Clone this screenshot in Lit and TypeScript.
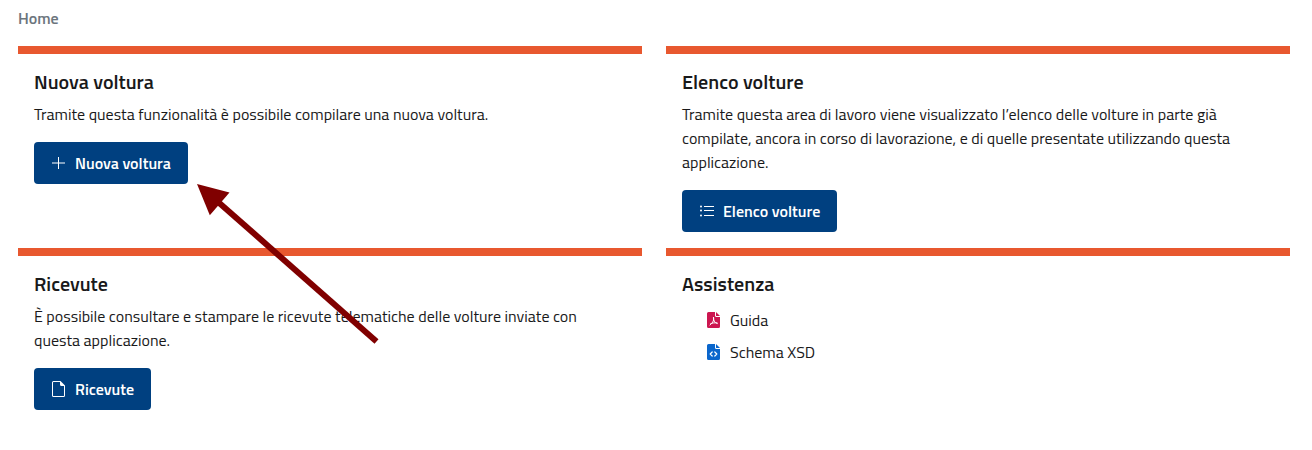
import { LitElement, html, svg, css } from "lit";
import { customElement } from "lit/decorators.js";

const icon = (body: unknown, cls = "") =>
  html`<svg class="icon ${cls}" viewBox="0 0 16 16" fill="currentColor" aria-hidden="true">${body}</svg>`;

const plus = svg`<path d="M1 7.500h6V2h1v5.500h6v1H8V14H7V8.500H1z" />`;
const list = svg`<path d="M5 3h10v1H5zM5 7h10v1H5zM5 12h10v1H5z" /><circle cx="2" cy="3.500" r="1" /><circle cx="2" cy="7.500" r="1" /><circle cx="2" cy="12.500" r="1" />`;
const file = svg`<path d="M9.500 0H2.500A1.500 1.500 0 0 0 1 1.500v13A1.500 1.500 0 0 0 2.500 16h10a1.500 1.500 0 0 0 1.500-1.500V4.500zM9 1v2.500A1.500 1.500 0 0 0 10.500 5H13v9.500a.500.500 0 0 1-.500.500h-10a.500.500 0 0 1-.500-.500v-13a.500.500 0 0 1 .500-.500z" />`;
const sheet = svg`<path d="M3 0h6v3.500A1.500 1.500 0 0 0 10.500 5H14v9.500a1.500 1.500 0 0 1-1.500 1.500h-10A1.500 1.500 0 0 1 1 14.500v-13A1.500 1.500 0 0 1 2.500 0zM10 0l4 4h-3.500a.500.500 0 0 1-.500-.500z" />`;
const pdf = svg`${sheet}<path d="M7.500 5.500c.800 2-.200 5-3.500 7.500M7.500 5.500c-.500 2.500 1 5.200 3.700 6M4.500 11.800c2-1 4-1.200 6.700-.800" fill="none" stroke="#fff" stroke-width="1" stroke-linecap="round" />`;
const code = svg`${sheet}<path d="M6.200 8 4.200 10l2 2M8.800 8l2 2-2 2" fill="none" stroke="#fff" stroke-width="1.200" stroke-linecap="round" stroke-linejoin="round" />`;

@customElement("app-root")
export class AppRoot extends LitElement {
  static styles = css`
    :host {
      display: block;
      position: relative;
      padding: 6px 22px 24px 18px;
      background: #fff;
      color: #19191a;
      font: 16px/24px "Titillium Web", Lato, sans-serif;
    }
    .crumbs {
      margin-bottom: 16px;
    }
    .crumb {
      color: #6c757d;
      font-weight: 600;
      text-decoration: none;
    }
    .grid {
      display: grid;
      grid-template-columns: repeat(2, minmax(0, 1fr));
      column-gap: 24px;
    }
    .card {
      border-top: 8px solid #e8582f;
      padding: 16px;
    }
    .title {
      margin: 0 0 8px;
      font-size: 20px;
      line-height: 24px;
      font-weight: 600;
    }
    .text {
      margin: 0 0 16px;
    }
    .button {
      display: inline-flex;
      align-items: center;
      gap: 8px;
      height: 42px;
      padding: 0 17px;
      border: 0;
      border-radius: 4px;
      background: #004080;
      color: #fff;
      font: inherit;
      font-weight: 600;
      cursor: pointer;
    }
    .icon {
      width: 16px;
      height: 16px;
      flex: none;
    }
    .links {
      list-style: none;
      margin: 0;
      padding: 0 24px;
    }
    .link {
      display: flex;
      align-items: center;
      gap: 8px;
      height: 32px;
      color: inherit;
      text-decoration: none;
    }
    .red {
      color: #cc1650;
    }
    .blue {
      color: #0a66cc;
    }
    .arrow {
      position: absolute;
      left: 197px;
      top: 184px;
      width: 182px;
      height: 160px;
      pointer-events: none;
    }
  `;

  render() {
    return html`
      <nav class="crumbs" aria-label="Breadcrumb"><a class="crumb" href="#">Home</a></nav>
      <main class="grid">
        <section class="card">
          <h2 class="title">Nuova voltura</h2>
          <p class="text">Tramite questa funzionalità è possibile compilare una nuova voltura.</p>
          <button class="button" type="button">${icon(plus)}Nuova voltura</button>
        </section>
        <section class="card">
          <h2 class="title">Elenco volture</h2>
          <p class="text">
            Tramite questa area di lavoro viene visualizzato l’elenco delle volture in parte già compilate, ancora in
            corso di lavorazione, e di quelle presentate utilizzando questa applicazione.
          </p>
          <button class="button" type="button">${icon(list)}Elenco volture</button>
        </section>
        <section class="card">
          <h2 class="title">Ricevute</h2>
          <p class="text">
            È possibile consultare e stampare le ricevute telematiche delle volture inviate con questa applicazione.
          </p>
          <button class="button" type="button">${icon(file)}Ricevute</button>
        </section>
        <section class="card">
          <h2 class="title">Assistenza</h2>
          <ul class="links">
            <li><a class="link" href="#">${icon(pdf, "red")}Guida</a></li>
            <li><a class="link" href="#">${icon(code, "blue")}Schema XSD</a></li>
          </ul>
        </section>
      </main>
      <svg class="arrow" viewBox="0 0 182 160" aria-hidden="true">
        <path d="M20 17 179.500 157.500" stroke="#800000" stroke-width="6" />
        <path d="M0 0 32.500 8.500 12.800 31.200z" fill="#800000" />
      </svg>
    `;
  }
}
